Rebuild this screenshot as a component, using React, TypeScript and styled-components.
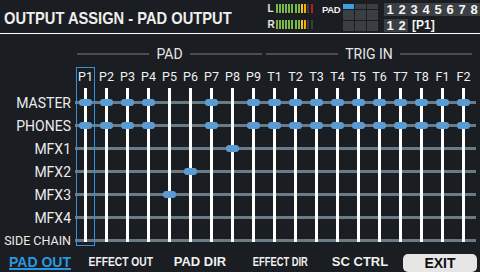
import React from "react";
import styled, { createGlobalStyle } from "styled-components";

const GlobalStyle = createGlobalStyle`
  html, body {
    margin: 0;
    padding: 0;
    background: #1a1d21;
  }
`;

const BG = "#1a1d21";
const DOT = "#5b9bd4";
const HLINE = "#6a7b87";
const CELL = "#3b3e43";
const SELECT = "#3a8fd8";
const GRID_COLS = "75px repeat(19, 21px)";

const Screen = styled.div`
  width: 480px;
  height: 272px;
  overflow: hidden;
  background: ${BG};
  color: #f2f2f2;
  font-family: Roboto, "Liberation Sans", sans-serif;
  display: flex;
  flex-direction: column;
`;

/* top bar */
const TopBar = styled.div`
  height: 33px;
  border-bottom: 1px solid #ffffff;
  display: flex;
  align-items: flex-start;
  flex-shrink: 0;
`;

const Title = styled.div`
  flex: 0 0 264px;
  box-sizing: border-box;
  padding: 9px 0 0 4px;
  font-family: "Liberation Sans", Arial, sans-serif;
  font-weight: 700;
  font-size: 17px;
  line-height: 20px;
  white-space: nowrap;
  color: #eeeeee;

  span {
    display: inline-block;
    transform: scaleX(0.864);
    transform-origin: left center;
  }
`;

const Meters = styled.div`
  width: 48px;
  margin-right: 8px;
  padding-top: 4px;
  display: flex;
  flex-direction: column;
  gap: 7px;
`;

const MeterRow = styled.div`
  display: flex;
  align-items: center;
  height: 9px;
`;

const Channel = styled.span`
  width: 8px;
  font-family: "Liberation Sans", Arial, sans-serif;
  font-weight: 700;
  font-size: 10px;
  line-height: 9px;
  color: #e8e8e8;
`;

const Bars = styled.div`
  display: flex;
  gap: 1.2px;
  height: 9px;
`;

const Bar = styled.i<{ $color: string }>`
  display: block;
  width: 2px;
  height: 9px;
  background: ${(p) => p.$color};
`;

const PadBlock = styled.div`
  display: flex;
  align-items: flex-start;
  padding-top: 4px;
`;

const PadLabel = styled.span`
  width: 21px;
  font-family: "Liberation Sans", Arial, sans-serif;
  font-weight: 700;
  font-size: 9.5px;
  line-height: 10px;
  letter-spacing: -0.4px;
  margin-top: 1px;
  color: #eeeeee;
`;

const PadGrid = styled.div`
  display: grid;
  grid-template-columns: repeat(3, 11px);
  grid-template-rows: 5px 10px 10px;
  gap: 1px;
`;

const PadCell = styled.i<{ $lit?: boolean }>`
  display: block;
  background: ${(p) => (p.$lit ? "#3aa0e2" : CELL)};
`;

const Numbers = styled.div`
  margin-left: 6px;
  padding-top: 3px;
  display: flex;
  flex-direction: column;
  gap: 3px;
`;

const NumRow = styled.div`
  display: flex;
  align-items: center;
  height: 13px;
`;

const NumCell = styled.span`
  width: 12px;
  height: 13px;
  background: ${CELL};
  font-family: "Liberation Sans", Arial, sans-serif;
  font-weight: 700;
  font-size: 13px;
  line-height: 13px;
  text-align: center;
  color: #f4f4f4;
`;

const Bracket = styled.span`
  margin-left: 4px;
  font-family: "Liberation Sans", Arial, sans-serif;
  font-weight: 700;
  font-size: 12px;
  line-height: 13px;
  color: #f4f4f4;
`;

/* group headers */
const Groups = styled.div`
  margin-top: 10px;
  height: 20px;
  display: grid;
  grid-template-columns: ${GRID_COLS};
`;

const Group = styled.div<{ $from: number; $to: number }>`
  grid-column: ${(p) => `${p.$from} / ${p.$to}`};
  margin: 0 2px;
  display: flex;
  align-items: center;
  gap: 7px;
  font-size: 14px;
  line-height: 20px;
  color: #e6e6e6;

  &::before,
  &::after {
    content: "";
    flex: 1;
    height: 2px;
    background: #4a4d52;
  }
`;

/* matrix */
const Matrix = styled.div`
  margin-top: 3px;
  display: grid;
  grid-template-columns: ${GRID_COLS};
  grid-template-rows: 24px repeat(7, 23px);
`;

const ColLabel = styled.div<{ $col: number }>`
  grid-row: 1;
  grid-column: ${(p) => p.$col};
  align-self: start;
  text-align: center;
  font-size: 12.5px;
  line-height: 19px;
  color: #f0f0f0;
`;

const RowLabel = styled.div<{ $row: number; $small?: boolean }>`
  grid-column: 1;
  grid-row: ${(p) => p.$row};
  align-self: center;
  justify-self: end;
  padding-right: 4px;
  font-size: ${(p) => (p.$small ? "12.5px" : "14px")};
  line-height: 16px;
  white-space: nowrap;
  color: #ececec;
`;

const Field = styled.div`
  grid-column: 2 / -1;
  grid-row: 2 / -1;
  align-self: start;
  margin: -3px -2px 0 0;
  height: 154px;
  background-image: linear-gradient(
      to right,
      transparent 9px,
      #ffffff 9px,
      #ffffff 12px,
      transparent 12px
    ),
    linear-gradient(
      to bottom,
      transparent 13px,
      ${HLINE} 13px,
      ${HLINE} 16px,
      transparent 16px
    );
  background-size: 21px 100%, 100% 23px;
  background-repeat: repeat-x, repeat-y;
`;

const Dot = styled.i<{ $col: number; $row: number }>`
  grid-column: ${(p) => p.$col};
  grid-row: ${(p) => p.$row};
  align-self: center;
  justify-self: center;
  display: block;
  width: 13px;
  height: 7px;
  border-radius: 3px;
  background: ${DOT};
`;

const Selection = styled.div<{ $col: number }>`
  grid-column: ${(p) => p.$col};
  grid-row: 1 / -1;
  margin: 0 1px 6px 1px;
  border: 1px solid ${SELECT};
`;

/* bottom tabs */
const Tabs = styled.div`
  margin-top: auto;
  height: 20px;
  display: grid;
  grid-template-columns: repeat(6, 80px);
  align-items: center;
`;

const Tab = styled.div<{ $active?: boolean; $squeeze?: number }>`
  text-align: center;
  font-family: "Liberation Sans", Arial, sans-serif;
  font-weight: 700;
  font-size: ${(p) => (p.$active ? "14px" : "13px")};
  line-height: 20px;
  white-space: nowrap;
  color: ${(p) => (p.$active ? "#2a98de" : "#f0f0f0")};

  span {
    display: inline-block;
    transform: scaleX(${(p) => p.$squeeze ?? 1});
    text-decoration: ${(p) => (p.$active ? "underline" : "none")};
    text-decoration-thickness: 2px;
    text-underline-offset: 1px;
  }
`;

const ExitButton = styled.div`
  align-self: start;
  margin: 2px 3px 0 3px;
  height: 18px;
  border-radius: 5px;
  background: #e6e6e6;
  color: #111111;
  font-family: "Liberation Sans", Arial, sans-serif;
  font-weight: 700;
  font-size: 14px;
  line-height: 18px;
  text-align: center;
`;

const COLS = [
  "P1", "P2", "P3", "P4", "P5", "P6", "P7", "P8", "P9",
  "T1", "T2", "T3", "T4", "T5", "T6", "T7", "T8", "F1", "F2",
];

const MAIN = [0, 1, 2, 3, 6, 8, 9, 10, 11, 12, 13, 14, 15, 16, 17, 18];

const ROWS: { name: string; on: number[]; small?: boolean }[] = [
  { name: "MASTER", on: MAIN },
  { name: "PHONES", on: MAIN },
  { name: "MFX1", on: [7] },
  { name: "MFX2", on: [5] },
  { name: "MFX3", on: [4] },
  { name: "MFX4", on: [] },
  { name: "SIDE CHAIN", on: [], small: true },
];

const GREEN = "#7ab648";
const UNLIT = "#3a3d42";
const METER_L = [...Array(8).fill(GREEN), "#f2c40c", "#f5b000", UNLIT, "#c41a1a"];
const METER_R = [...Array(8).fill(GREEN), "#f2c40c", "#f5b000", UNLIT, UNLIT];

const TABS = [
  { label: "PAD OUT", active: true },
  { label: "EFFECT OUT", squeeze: 0.79 },
  { label: "PAD DIR" },
  { label: "EFFECT DIR", squeeze: 0.72 },
  { label: "SC CTRL" },
];

export default function App() {
  return (
    <>
      <GlobalStyle />
      <Screen>
        <TopBar>
          <Title>
            <span>OUTPUT ASSIGN - PAD OUTPUT</span>
          </Title>
          <Meters>
            <MeterRow>
              <Channel>L</Channel>
              <Bars>
                {METER_L.map((c, i) => (
                  <Bar key={i} $color={c} />
                ))}
              </Bars>
            </MeterRow>
            <MeterRow>
              <Channel>R</Channel>
              <Bars>
                {METER_R.map((c, i) => (
                  <Bar key={i} $color={c} />
                ))}
              </Bars>
            </MeterRow>
          </Meters>
          <PadBlock>
            <PadLabel>PAD</PadLabel>
            <PadGrid>
              {Array.from({ length: 9 }, (_, i) => (
                <PadCell key={i} $lit={i === 0} />
              ))}
            </PadGrid>
          </PadBlock>
          <Numbers>
            <NumRow>
              {[1, 2, 3, 4, 5, 6, 7, 8].map((n) => (
                <NumCell key={n}>{n}</NumCell>
              ))}
            </NumRow>
            <NumRow>
              <NumCell>1</NumCell>
              <NumCell>2</NumCell>
              <Bracket>[P1]</Bracket>
            </NumRow>
          </Numbers>
        </TopBar>

        <Groups>
          <Group $from={2} $to={11}>PAD</Group>
          <Group $from={11} $to={21}>TRIG IN</Group>
        </Groups>

        <Matrix>
          {COLS.map((c, i) => (
            <ColLabel key={c} $col={i + 2}>
              {c}
            </ColLabel>
          ))}
          {ROWS.map((r, i) => (
            <RowLabel key={r.name} $row={i + 2} $small={r.small}>
              {r.name}
            </RowLabel>
          ))}
          <Field />
          {ROWS.map((r, ri) =>
            r.on.map((ci) => (
              <Dot key={`${r.name}-${ci}`} $col={ci + 2} $row={ri + 2} />
            ))
          )}
          <Selection $col={2} />
        </Matrix>

        <Tabs>
          {TABS.map((t) => (
            <Tab key={t.label} $active={t.active} $squeeze={t.squeeze}>
              <span>{t.label}</span>
            </Tab>
          ))}
          <ExitButton>EXIT</ExitButton>
        </Tabs>
      </Screen>
    </>
  );
}
